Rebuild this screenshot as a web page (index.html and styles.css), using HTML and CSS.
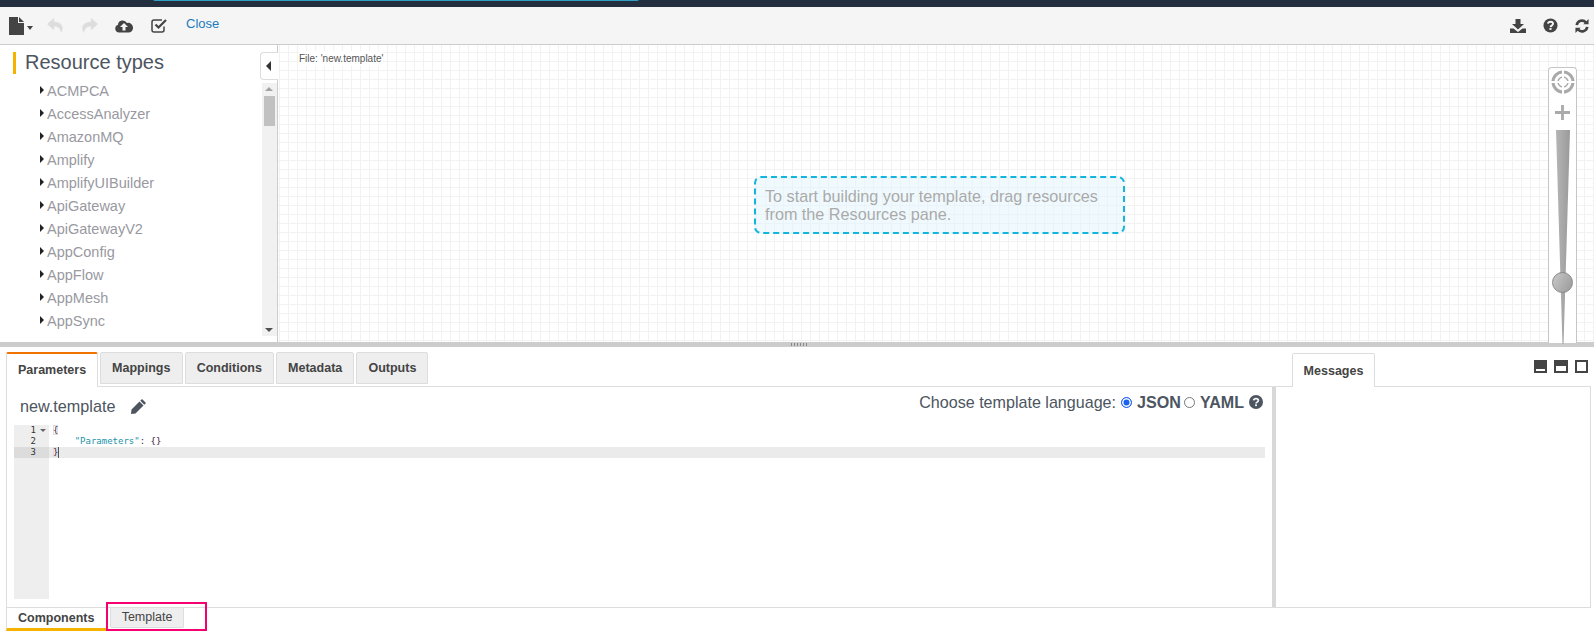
FILE: index.html
```html
<!DOCTYPE html>
<html lang="en">
<head>
<meta charset="utf-8">
<title>Template designer</title>
<link rel="stylesheet" href="styles.css">
</head>
<body>
<div class="topbar"><div class="topbar-field"></div></div>
<header class="toolbar">
  <div class="tools">
    <svg class="ico file" viewBox="0 0 15 18"><path d="M0 0h9v6h6v12H0z"/><path d="M10 0l5 5h-5z"/></svg>
    <span class="caret"></span>
    <svg class="ico undo" viewBox="0 0 18 16"><path d="M7.500 0L0 6.500 7.500 13V9c4 0 6.500 1.500 7.500 7 3.500-6 1.500-11.500-7.500-12z"/></svg>
    <svg class="ico redo" viewBox="0 0 18 16"><path d="M10.500 0L18 6.500 10.500 13V9c-4 0-6.500 1.500-7.500 7-3.500-6-1.500-11.500 7.500-12z"/></svg>
    <svg class="ico cloud" viewBox="0 0 18 13"><path d="M4 13a4 4 0 0 1-1-7.800A4.500 4.500 0 0 1 7 1a5 5 0 0 1 5 2.500A4.800 4.800 0 0 1 18 8.500 4.500 4.500 0 0 1 13.500 13z"/><path class="cut" d="M9 3.500L13 7.500h-2.500V11h-3V7.500H5z"/></svg>
    <svg class="ico check" viewBox="0 0 16 15"><path class="line" d="M13 8.500v3.500a2 2 0 0 1-2 2H3a2 2 0 0 1-2-2V4a2 2 0 0 1 2-2h8"/><path class="line thick" d="M4.500 6.500l3 3L15 2"/></svg>
    <a class="close-link" href="#">Close</a>
  </div>
  <div class="tools right">
    <svg class="ico dl" viewBox="0 0 16 14"><path d="M5.500 0h5v5H14L8 10.500 2 5h3.500z"/><path d="M0 9.500h3.500L8 13l4.500-3.500H16V14H0z"/></svg>
    <svg class="ico help" viewBox="0 0 16 16"><circle cx="8" cy="8" r="7.500"/><path class="cut-line" d="M5.300 6.100C5.500 4.600 6.600 4 8 4c1.600 0 2.700.9 2.700 2.200 0 1.900-2.600 1.900-2.700 3.500"/><rect class="cut" x="6.900" y="10.700" width="2.200" height="2"/></svg>
    <svg class="ico sync" viewBox="0 0 16 16"><path class="line two" d="M2 7a6 6 0 0 1 10.500-3"/><path d="M15.500 0v6h-6z"/><path class="line two" d="M14 9a6 6 0 0 1-10.500 3"/><path d="M.5 16v-6h6z"/></svg>
  </div>
</header>

<main class="upper">
  <aside class="resources">
    <h1 class="res-title">Resource types</h1>
    <div class="res-scroll">
      <ul class="res-list">
        <li>ACMPCA</li>
        <li>AccessAnalyzer</li>
        <li>AmazonMQ</li>
        <li>Amplify</li>
        <li>AmplifyUIBuilder</li>
        <li>ApiGateway</li>
        <li>ApiGatewayV2</li>
        <li>AppConfig</li>
        <li>AppFlow</li>
        <li>AppMesh</li>
        <li>AppSync</li>
      </ul>
      <div class="scrollbar">
        <span class="arrow up"></span>
        <span class="thumb"></span>
        <span class="arrow down"></span>
      </div>
    </div>
    <button class="collapse" type="button" aria-label="Collapse"></button>
  </aside>
  <section class="canvas">
    <div class="file-label">File: 'new.template'</div>
    <div class="hint">To start building your template, drag resources from the Resources pane.</div>
    <div class="zoomer">
      <svg class="target" viewBox="0 0 24 24"><circle class="ring" cx="12" cy="12" r="10"/><circle class="ring thin" cx="12" cy="12" r="5"/><path class="ring thin cross" d="M12 0v8M12 16v8M0 12h8M16 12h8"/></svg>
      <svg class="plus" viewBox="0 0 16 16"><path d="M6.500 0h3v6.500H16v3H9.500V16h-3V9.500H0v-3h6.500z"/></svg>
      <div class="wedge"></div>
      <div class="knob"></div>
    </div>
  </section>
</main>

<div class="splitter"><span class="grip"></span></div>

<section class="lower">
  <div class="tabrow">
    <nav class="tabs">
      <span class="tab active">Parameters</span>
      <span class="tab">Mappings</span>
      <span class="tab">Conditions</span>
      <span class="tab">Metadata</span>
      <span class="tab">Outputs</span>
    </nav>
    <span class="tab msg-tab">Messages</span>
    <div class="layout-btns">
      <span class="lbtn low"></span><span class="lbtn mid"></span><span class="lbtn full"></span>
    </div>
  </div>
  <div class="work">
    <div class="editor-pane">
      <div class="pane-head">
        <div class="fname">new.template
          <svg class="pencil" viewBox="0 0 15 15"><path d="M11 0l4 4-1.700 1.700-4-4zM8.500 2.500l4 4L4.500 14.500 0 15l.5-4.500z"/></svg>
        </div>
        <div class="lang">Choose template language:
          <span class="radio on"></span><b>JSON</b>
          <span class="radio second"></span><b>YAML</b>
          <svg class="q" viewBox="0 0 16 16"><circle cx="8" cy="8" r="8"/><path class="cut-line" d="M5.300 6.100C5.500 4.600 6.600 4 8 4c1.600 0 2.700.9 2.700 2.200 0 1.900-2.600 1.900-2.700 3.500"/><rect class="cut" x="6.900" y="10.700" width="2.200" height="2"/></svg>
        </div>
      </div>
      <div class="editor">
        <div class="gutter">
          <div class="ln">1<span class="fold"></span></div>
          <div class="ln">2</div>
          <div class="ln cur">3</div>
        </div>
        <div class="code">
          <div class="cl"><span class="brace boxed">{</span></div>
          <div class="cl">    <span class="key">"Parameters"</span>: <span class="brace">{}</span></div>
          <div class="cl cur"><span class="brace boxed">}</span><span class="cursor"></span></div>
        </div>
      </div>
    </div>
    <div class="msg-pane"></div>
  </div>
  <div class="bottom-tabs">
    <span class="btab active">Components</span>
    <span class="btab plain">Template</span>
    <span class="highlight"></span>
  </div>
</section>
</body>
</html>
```
FILE: styles.css
```css
* { box-sizing: border-box; }
html, body { margin: 0; padding: 0; height: 631px; overflow: hidden; background: #fff; }
body { font-family: "Liberation Sans", Arial, sans-serif; color: #444; display: flex; flex-direction: column; }

.topbar { height: 7px; background: #232f3e; flex: none; position: relative; }
.topbar-field { position: absolute; left: 152px; top: -3px; width: 488px; height: 4px; border: 1px solid #2f9fc4; border-radius: 0 0 3px 3px; }

.toolbar { height: 38px; flex: none; display: flex; justify-content: space-between; background: #f5f5f5; border-bottom: 1px solid #ccc; }
.tools { display: flex; align-items: center; padding-left: 9px; height: 37px; }
.tools.right { padding: 0 5px 0 0; }
.ico { display: block; fill: #444; flex: none; }
.file { width: 15px; height: 18px; }
.caret { width: 0; height: 0; margin: 4px 0 0 3px; border: 3px solid transparent; border-top: 4px solid #444; border-bottom: 0; }
.undo { width: 17px; height: 15px; margin-left: 14px; fill: #ddd; }
.redo { width: 17px; height: 15px; margin-left: 17px; fill: #ddd; }
.cloud { width: 18px; height: 14px; margin-left: 17px; }
.check { width: 16px; height: 15px; margin-left: 18px; }
.cut { fill: #f5f5f5; }
.line { fill: none; stroke: #444; stroke-width: 1.500; }
.line.thick { stroke-width: 2.200; }
.line.two { stroke-width: 3; }
.cut-line { fill: none; stroke: #f5f5f5; stroke-width: 2; }
.close-link { margin: -4px 0 0 19px; font-size: 13px; color: #1a7bbf; text-decoration: none; }
.dl { width: 16px; height: 14px; margin-right: 17px; }
.help { width: 15px; height: 15px; margin-right: 17px; }
.sync { width: 14px; height: 14px; }

.upper { height: 297px; flex: none; display: flex; }
.resources { width: 278px; flex: none; position: relative; border-right: 1px solid #ccc; display: flex; flex-direction: column; background: #fff; }
.res-title { margin: 7px 0 0 13px; height: 22px; padding-left: 9px; border-left: 3px solid #f5b300; font-size: 20px; line-height: 20px; font-weight: 400; color: #4c5560; }
.res-scroll { display: flex; flex: 1; min-height: 0; justify-content: space-between; padding-top: 3px; }
.res-list { list-style: none; margin: 0; padding: 3px 0 0 40px; }
.res-list li { height: 23px; line-height: 23px; font-size: 14.500px; color: #99999f; position: relative; padding-left: 7px; }
.res-list li::before { content: ""; position: absolute; left: 0; top: 6px; border: 4px solid transparent; border-left: 4px solid #222; border-right: 0; }
.scrollbar { width: 15px; margin-top: 6px; height: 253px; background: #f1f1f1; position: relative; flex: none; }
.arrow { position: absolute; left: 3px; border: 4px solid transparent; }
.arrow.up { top: 4px; border-bottom: 4px solid #a3a3a3; border-top: 0; }
.arrow.down { bottom: 4px; border-top: 4px solid #505050; border-bottom: 0; }
.thumb { position: absolute; left: 2px; top: 13px; width: 11px; height: 30px; background: #c1c1c1; }
.collapse { position: absolute; left: 260px; top: 7px; width: 18px; height: 28px; padding: 0; background: #fff; border: 1px solid #ddd; border-right: 0; border-radius: 4px 0 0 4px; }
.collapse::before { content: ""; position: absolute; left: 5px; top: 8px; border: 5px solid transparent; border-right: 5px solid #333; border-left: 0; }

.canvas { flex: 1; position: relative; background-color: #fff; background-image: linear-gradient(#f2f2f2 1px, transparent 1px), linear-gradient(90deg, #f2f2f2 1px, transparent 1px); background-size: 9px 9px; background-position: 1px 7px; }
.file-label { position: absolute; left: 21px; top: 6px; font-size: 10px; line-height: 15px; color: #555; background: #fff; }
.hint { position: absolute; left: 476px; top: 131px; width: 371px; height: 58px; padding: 9px 9px; background: rgba(225, 245, 254, .5); border: 2px dashed #14b5dd; border-radius: 7px; font-size: 16.200px; line-height: 18px; color: #aaa; }
.zoomer { position: absolute; left: 1270px; top: 22px; width: 29px; height: 276px; background: #fff; border: 1px solid #c6c6c6; border-bottom: 0; border-radius: 4px 4px 0 0; }
.target { position: absolute; left: 2px; top: 2px; width: 24px; height: 24px; }
.ring { fill: none; stroke: #aaa; stroke-width: 3; }
.ring.thin { stroke-width: 1.500; }
.ring.cross { stroke: #fff; stroke-width: 2; }
.plus { position: absolute; left: 6px; top: 37px; width: 15px; height: 15px; fill: #aaa; }
.wedge { position: absolute; left: 7px; top: 62px; width: 14px; height: 214px; background: linear-gradient(90deg, #b5b5b5, #9a9a9a); clip-path: polygon(0 0, 100% 0, 54% 100%, 46% 100%); }
.knob { position: absolute; left: 3px; top: 204px; width: 21px; height: 21px; border-radius: 50%; background: linear-gradient(120deg, #c9c9c9, #999); border: 1px solid #888; }

.splitter { height: 5px; flex: none; background: #ccc; display: flex; justify-content: center; }
.grip { width: 18px; height: 3px; margin: 1px 0 0 6px; background: repeating-linear-gradient(90deg, #888 0 1px, transparent 1px 3px); }

.lower { flex: 1; min-height: 0; padding: 0 0 0 6px; position: relative; display: flex; flex-direction: column; }
.tabrow { height: 39px; flex: none; display: flex; align-items: flex-end; position: relative; z-index: 1; }
.tabs { display: flex; gap: 2px; width: 1286px; flex: none; align-self: stretch; padding-top: 5px; }
.tab { font-size: 12.500px; font-weight: 700; color: #444; background: #eee; border: 1px solid #ddd; border-radius: 2px 2px 0 0; height: 32px; line-height: 31px; padding: 0 11.100px; }
.tab.active { background: #fff; height: 35px; width: 92px; border-top: 2px solid #f07300; border-bottom: 0; padding: 2px 11px 0; color: #444; line-height: 29px; }
.msg-tab { background: #fff; height: 34px; width: 83px; border-bottom: 0; padding: 3px 0 0; text-align: center; margin-bottom: -1px; line-height: 29px; }
.layout-btns { position: absolute; right: 6px; top: 13px; display: flex; gap: 7px; }
.lbtn { width: 13px; height: 13px; background: #444; position: relative; display: block; }
.lbtn.mid { width: 14px; }
.lbtn::after { content: ""; position: absolute; background: #fff; left: 2px; right: 2px; }
.lbtn.low::after { top: 9px; height: 2px; }
.lbtn.mid::after { top: 6px; bottom: 2px; }
.lbtn.full::after { top: 2px; bottom: 2px; }

.work { flex: 1; min-height: 0; display: flex; border: 1px solid #ddd; width: 1585px; }
.editor-pane { width: 1269px; flex: none; padding: 0 7px; border-right: 4px solid #d8d8d8; display: flex; flex-direction: column; }
.pane-head { height: 38px; flex: none; display: flex; justify-content: space-between; padding: 0 2px 0 6px; }
.fname { font-size: 16.200px; line-height: 40px; color: #4c5560; display: flex; align-items: center; }
.pencil { width: 15px; height: 15px; margin-left: 16px; fill: #4c5560; }
.lang { font-size: 16.100px; line-height: 30px; color: #4c5560; display: flex; align-items: center; height: 30px; }
.lang b { font-weight: 700; }
.radio { width: 11px; height: 11px; border-radius: 50%; border: 1px solid #777; margin: 0 5px; background: #fff; display: block; }
.radio.second { margin-left: 3px; }
.radio.on { background: #1a62f0; border-color: #1a62f0; box-shadow: inset 0 0 0 1.500px #fff; }
.q { width: 14px; height: 14px; margin-left: 5px; fill: #4c5560; }
.editor { display: flex; flex: 1; min-height: 0; padding-bottom: 8px; font-family: "DejaVu Sans Mono", "Liberation Mono", monospace; font-size: 9px; line-height: 11px; }
.gutter { width: 35px; flex: none; background: #eee; color: #333; }
.ln { height: 11px; text-align: right; padding-right: 13px; position: relative; }
.ln.cur { background: #dcdcdc; }
.fold { position: absolute; right: 3px; top: 4px; border: 3px solid transparent; border-top: 3px solid #666; border-bottom: 0; }
.code { flex: 1; }
.cl { height: 11px; white-space: pre; padding-left: 4px; color: #333; }
.cl.cur { background: #ebebeb; }
.key { color: #1a93a8; }
.brace { color: #3f1a3a; }
.boxed { box-shadow: inset 0 0 0 1px #ddd; }
.cursor { display: inline-block; width: 1px; height: 11px; background: #555; vertical-align: top; }

.msg-pane { flex: 1; }

.bottom-tabs { height: 23px; flex: none; display: flex; align-items: flex-start; position: relative; }
.btab { font-size: 12.500px; }
.btab.active { width: 100px; height: 23px; padding: 2px 0 0 11px; line-height: 16px; font-weight: 700; color: #444; border-bottom: 3px solid #f5b300; border-left: 1px solid #ddd; }
.btab.plain { margin: 0 0 0 4px; width: 74px; height: 20px; line-height: 18px; text-align: center; background: #eee; border: 1px solid #ddd; border-top: 0; border-radius: 0 0 2px 2px; color: #444; }
.highlight { position: absolute; left: 100px; top: -6px; width: 101px; height: 29px; border: 2px solid #f5006e; }
```
